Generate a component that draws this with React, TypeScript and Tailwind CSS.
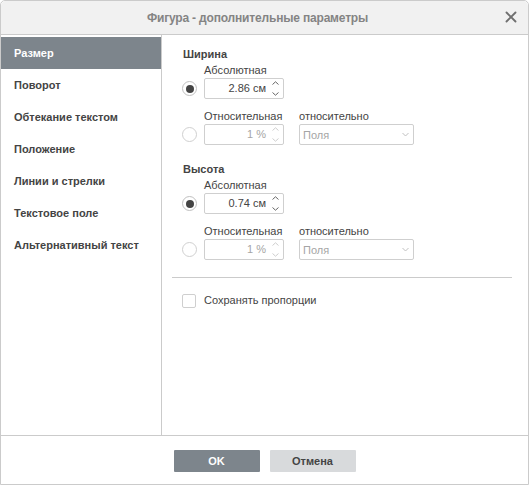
import React from "react";
import { X } from "lucide-react";

const menu = ["Размер", "Поворот", "Обтекание текстом", "Положение", "Линии и стрелки", "Текстовое поле", "Альтернативный текст"];

const Spinner = ({ value, disabled }: { value: string; disabled?: boolean }) => (
  <div className={`flex h-[21px] w-20 items-center justify-between rounded-[2px] border border-[#cfcfcf] pr-[4px] ${disabled ? "text-[#a5a5a5]" : "text-[#444444]"}`}>
    <span className="flex-1 pr-[6px] text-right text-[11px] leading-none">{value}</span>
    <svg width="7" height="15" viewBox="0 0 7 15" fill="none" stroke={disabled ? "#c8c8c8" : "#555555"} strokeWidth="0.9">
      <path d="M0.5 3.5L3.5 0.8l3 2.7" />
      <path d="M0.5 11.5l3 2.7 3-2.7" />
    </svg>
  </div>
);

const Radio = ({ on }: { on?: boolean }) => (
  <div className={`flex h-[15px] w-[15px] items-center justify-center rounded-full border ${on ? "border-[#c0c0c0]" : "border-[#d0d0d0]"}`}>
    {on && <div className="h-2 w-2 rounded-full bg-[#444444]" />}
  </div>
);

const SizeGroup = ({ title, abs }: { title: string; abs: string }) => (
  <div>
    <div className="ml-[1px] h-[15px] text-[11px] font-bold leading-[15px] text-[#444444]">{title}</div>
    <div className="ml-[22px] mt-[1px] h-[15px] text-[11px] leading-[15px] text-[#444444]">Абсолютная</div>
    <div className="flex items-center gap-[7px]">
      <Radio on />
      <Spinner value={abs} />
    </div>
    <div className="ml-[22px] mt-[10px] flex h-[15px] text-[11px] leading-[15px] text-[#444444]">
      <span className="w-[95px]">Относительная</span>
      <span>относительно</span>
    </div>
    <div className="flex items-center">
      <Radio />
      <div className="ml-[7px]">
        <Spinner value="1 %" disabled />
      </div>
      <div className="ml-[15px] flex h-[21px] w-[115px] items-center justify-between rounded-[2px] border border-[#cfcfcf] pl-[3px] pr-[4px] text-[11px] text-[#a5a5a5]">
        <span className="pt-[1px]">Поля</span>
        <svg width="7" height="5" viewBox="0 0 7 5" fill="none" stroke="#c0c0c0" strokeWidth="1">
          <path d="M0.5 1l3 3 3-3" />
        </svg>
      </div>
    </div>
  </div>
);

const App = () => {
  return (
    <div className="flex h-[485px] w-[529px] flex-col rounded-t-[5px] border border-[#cbcbcb] bg-white font-['Liberation_Sans',Arial,sans-serif]">
      <div className="relative flex h-[34px] shrink-0 items-center justify-center rounded-t-[5px] border-b border-[#cbcbcb] bg-[#f1f1f1] pr-[14px]">
        <span className="text-[12px] font-bold tracking-[-0.18px] text-[#848484]">Фигура - дополнительные параметры</span>
        <X className="absolute right-[8px] top-[7px] text-[#6f6f6f]" size={18} strokeWidth={2.5} />
      </div>
      <div className="flex min-h-0 flex-1">
        <div className="w-[161px] shrink-0 border-r border-[#cbcbcb] pt-[2px]">
          {menu.map((item, i) => (
            <div key={item} className={`flex h-8 items-center pl-[13px] text-[11px] font-bold ${i === 0 ? "bg-[#7d858c] text-white" : "text-[#444444]"}`}>
              {item}
            </div>
          ))}
        </div>
        <div className="flex-1 px-[10px] pt-[12px]">
          <div className="flex flex-col gap-[17px] pl-[10px]">
            <SizeGroup title="Ширина" abs="2.86 см" />
            <SizeGroup title="Высота" abs="0.74 см" />
          </div>
          <div className="mr-[6px] mt-[17px] border-t border-[#cbcbcb]" />
          <div className="ml-[10px] mt-[16px] flex items-center gap-[8px]">
            <div className="h-[14px] w-[14px] rounded-[2px] border border-[#cfcfcf]" />
            <span className="pb-[1px] text-[11px] leading-[13px] text-[#444444]">Сохранять пропорции</span>
          </div>
        </div>
      </div>
      <div className="flex h-[49px] shrink-0 justify-center gap-[10px] border-t border-[#cbcbcb] pt-[14px]">
        <button className="h-[22px] w-[86px] rounded-[1px] bg-[#7d858c] text-[11px] font-bold text-white">OK</button>
        <button className="h-[22px] w-[86px] rounded-[1px] bg-[#d8dadc] text-[11px] font-bold text-[#444444]">Отмена</button>
      </div>
    </div>
  );
};

export default App;
